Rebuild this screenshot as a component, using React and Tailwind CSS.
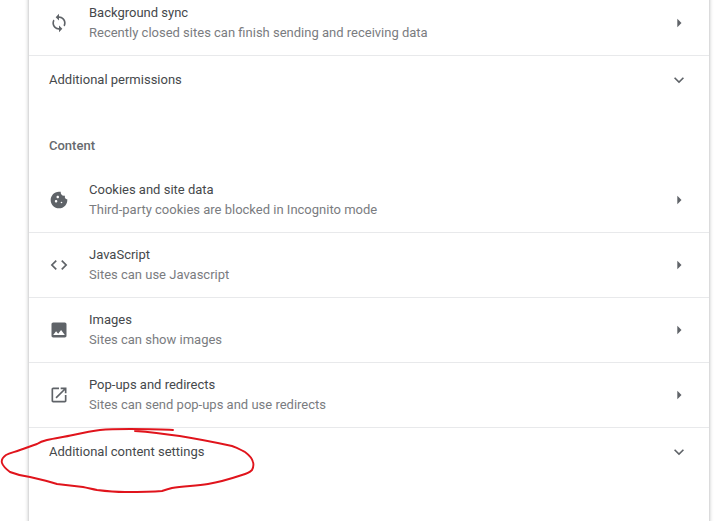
import React from "react";

const icons = {
  sync: "M12 4V1L8 5l4 4V6c3.31 0 6 2.69 6 6 0 1.01-.25 1.97-.7 2.8l1.46 1.46C19.54 15.03 20 13.57 20 12c0-4.42-3.58-8-8-8zm0 14c-3.31 0-6-2.69-6-6 0-1.01.25-1.97.7-2.8L5.24 7.74C4.46 8.97 4 10.43 4 12c0 4.42 3.58 8 8 8v3l4-4-4-4v3z",
  cookie: "M21.95 10.99c-1.79-.03-3.7-1.95-2.68-4.22-2.97 1-5.78-1.59-5.19-4.56C7.11.74 2 6.41 2 12c0 5.52 4.48 10 10 10 5.89 0 10.54-5.08 9.95-11.01zM8.5 15c-.83 0-1.5-.67-1.5-1.5S7.67 12 8.5 12s1.5.67 1.5 1.5S9.33 15 8.5 15zm2-5C9.67 10 9 9.33 9 8.5S9.67 7 10.5 7s1.5.67 1.5 1.5-.67 1.5-1.5 1.5zm4.5 6c-.55 0-1-.45-1-1s.45-1 1-1 1 .45 1 1-.45 1-1 1z",
  code: "M9.4 16.6L4.8 12l4.6-4.6L8 6l-6 6 6 6 1.4-1.4zm5.2 0l4.6-4.6-4.6-4.6L16 6l6 6-6 6-1.4-1.4z",
  image: "M21 19V5c0-1.1-.9-2-2-2H5c-1.1 0-2 .9-2 2v14c0 1.1.9 2 2 2h14c1.1 0 2-.9 2-2zM8.5 13.5l2.5 3.01L14.5 12l4.5 6H5l3.5-4.5z",
  popup: "M19 19H5V5h7V3H5c-1.11 0-2 .9-2 2v14c0 1.1.89 2 2 2h14c1.1 0 2-.9 2-2v-7h-2v7zM14 3v2h3.59l-9.83 9.83 1.41 1.41L19 6.41V10h2V3h-7z",
  arrow: "M10 7l5 5-5 5z",
  chevron: "M7.41 8.59L12 13.17l4.59-4.58L18 10l-6 6-6-6z",
};

const Icon = ({ name }) => (
  <svg viewBox="0 0 24 24" className="w-5 h-5 shrink-0 fill-[#5f6368]">
    <path d={icons[name]} />
  </svg>
);

const Row = ({ icon, title, sub }) => (
  <div className="flex items-center h-[65px] pl-5 pr-5 border-b border-[#e8e9eb]">
    <Icon name={icon} />
    <div className="ml-5 flex-1">
      <div className="text-[13px] leading-5 text-[#45484b]">{title}</div>
      <div className="text-[13px] leading-5 text-[#7a7c7f]">{sub}</div>
    </div>
    <Icon name="arrow" />
  </div>
);

const Expand = ({ label }) => (
  <div className="flex items-center justify-between h-12 pl-5 pr-5">
    <span className="text-[13px] text-[#45484b]">{label}</span>
    <Icon name="chevron" />
  </div>
);

const App = () => (
  <div className="relative h-[521px] w-[724px] overflow-hidden bg-white font-['Roboto',sans-serif]">
    <div className="ml-[29px] w-[680px] -mt-[9px] h-[560px] bg-white shadow-[0_0_4px_rgba(60,64,67,0.45)]">
      <Row
        icon="sync"
        title="Background sync"
        sub="Recently closed sites can finish sending and receiving data"
      />
      <Expand label="Additional permissions" />
      <div className="pl-5 pt-[32px] h-[64px] text-[13px] leading-5 font-medium text-[#666a6e]">Content</div>
      <Row icon="cookie" title="Cookies and site data" sub="Third-party cookies are blocked in Incognito mode" />
      <Row icon="code" title="JavaScript" sub="Sites can use Javascript" />
      <Row icon="image" title="Images" sub="Sites can show images" />
      <Row icon="popup" title="Pop-ups and redirects" sub="Sites can send pop-ups and use redirects" />
      <Expand label="Additional content settings" />
    </div>
    {/* hand drawn red circle on top of the screenshot */}
    <svg className="absolute left-0 top-0 pointer-events-none" width="724" height="521" fill="none">
      <path
        d="M135 431 C165 433 200 439 232 446 C238 448 241 450 245 452 C249 455 252 458 253 462 C254 465 253 468 252 470 C249 473 246 474 242 475 C230 479 220 482 208 484 C195 486 183 486 172 488 C168 489 165 490 162 491 C150 492 138 492 125 492 C115 492 105 491 97 490 C92 489 88 488 83 487 C74 486 66 485 57 484 C48 481 39 479 30 477 C22 476 15 474 10 472 C6 469 3 466 2 463 C1 460 2 458 6 455 C10 453 15 452 20 450 C26 448 31 446 37 444 C40 442 43 441 47 440 C56 438 64 437 73 435 C82 433 91 431 100 430 C110 429 120 429 130 429 C145 429 160 429 173 430"
        stroke="#e0141c"
        strokeWidth="1.9"
        strokeLinecap="round"
        strokeLinejoin="round"
      />
    </svg>
  </div>
);

export default App;
